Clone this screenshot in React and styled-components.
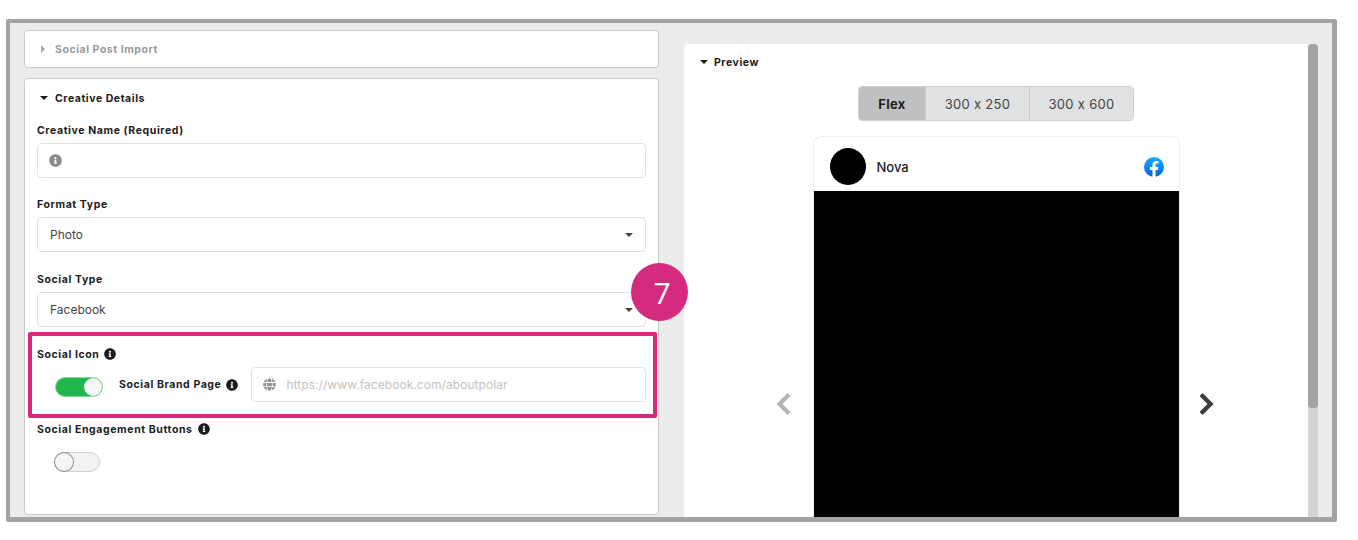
import styled, { createGlobalStyle } from 'styled-components'
import { FaInfoCircle, FaGlobe } from 'react-icons/fa'

const GlobalStyle = createGlobalStyle`
  html, body {
    margin: 0;
    padding: 0;
    background: #fff;
    font-family: "Inter", "Liberation Sans", sans-serif;
  }
`

const Page = styled.div`
  position: relative;
  width: 1358px;
  height: 540px;
  padding: 19px 0 0 6px;
  box-sizing: border-box;
  overflow: hidden;
`

const Frame = styled.div`
  display: flex;
  width: 1331px;
  height: 503px;
  box-sizing: border-box;
  padding: 7px 0 0 14px;
  background: #ececec;
  border: solid #a3a3a3;
  border-width: 4px 5px 5px 4px;
  border-radius: 2px;
  overflow: hidden;
`

const LeftColumn = styled.div`
  display: flex;
  flex-direction: column;
  gap: 10px;
  width: 635px;
  flex-shrink: 0;
`

const Card = styled.section`
  box-sizing: border-box;
  background: #fff;
  border: 1px solid #c9c9c9;
  border-radius: 4px;
  padding: 0 12px;
  height: ${p => p.$height};
`

const SectionHead = styled.div`
  display: flex;
  align-items: center;
  flex-shrink: 0;
  gap: ${p => p.$gap || '7px'};
  height: ${p => p.$height || '36px'};
  margin-bottom: ${p => p.$after || '0'};
  padding-left: 3px;
  font-size: 10.5px;
  font-weight: 700;
  letter-spacing: 0.55px;
  color: ${p => p.$muted ? '#9a9a9a' : '#1c1c1c'};
`

const CaretDown = styled.span`
  width: 0;
  height: 0;
  border-left: 4px solid transparent;
  border-right: 4px solid transparent;
  border-top: 4px solid ${p => p.$color || '#1c1c1c'};
`

const CaretRight = styled.span`
  width: 0;
  height: 0;
  margin-left: 1px;
  border-top: 4px solid transparent;
  border-bottom: 4px solid transparent;
  border-left: 4px solid #a8a8a8;
`

const Field = styled.div`
  display: flex;
  flex-direction: column;
  margin-bottom: ${p => p.$after || '19px'};
`

const Label = styled.div`
  display: flex;
  align-items: center;
  gap: 5px;
  height: 14px;
  margin-bottom: ${p => p.$after || '6px'};
  font-size: 10.5px;
  font-weight: 700;
  letter-spacing: 0.6px;
  color: #1c1c1c;
  white-space: nowrap;
`

const Info = styled(FaInfoCircle)`
  width: 12px;
  height: 12px;
  color: #1c1c1c;
  flex-shrink: 0;
`

const Input = styled.div`
  display: flex;
  align-items: center;
  justify-content: space-between;
  box-sizing: border-box;
  flex: ${p => p.$grow ? 1 : 'none'};
  height: 35px;
  padding: 0 12px;
  background: #fff;
  border: 1px solid #e2e2e2;
  border-radius: 4px;
  font-size: 12px;
  color: #444;
`

const GreyInfo = styled(FaInfoCircle)`
  width: 13px;
  height: 13px;
  margin-left: -1px;
  color: #8a8a8a;
`

const Highlight = styled.div`
  box-sizing: border-box;
  height: 86px;
  margin: -14px -11px 0 -9px;
  padding: 11px 7px 0 5px;
  border: 4px solid #d52b7e;
  border-radius: 2px;
`

const BrandRow = styled.div`
  display: flex;
  align-items: center;
`

const Toggle = styled.span`
  display: flex;
  align-items: center;
  justify-content: ${p => p.$on ? 'flex-end' : 'flex-start'};
  box-sizing: border-box;
  width: ${p => p.$on ? '48px' : '46px'};
  height: 20px;
  margin-left: ${p => p.$on ? '18px' : '17px'};
  margin-top: ${p => p.$on ? '5px' : '0'};
  border-radius: 10px;
  background: ${p => p.$on ? '#21b84b' : '#f2f2f2'};
  border: 1px solid ${p => p.$on ? '#8fd7a2' : '#cfcfcf'};
`

const Knob = styled.span`
  width: 18px;
  height: 18px;
  border-radius: 50%;
  background: #f6f6f6;
  box-shadow: 0 0 0 1px ${p => p.$on ? 'transparent' : '#8d8d8d'};
`

const BrandLabel = styled(Label)`
  margin: 0 13px 0 16px;
`

const Placeholder = styled.span`
  display: flex;
  align-items: center;
  gap: 10px;
  color: #c2c2c2;
  letter-spacing: 0.06px;
`

const Globe = styled(FaGlobe)`
  width: 13px;
  height: 13px;
  margin-left: -1px;
  color: #8f8f8f;
`

const EngagementBlock = styled.div`
  margin-top: 4px;
`

const PreviewPanel = styled.div`
  display: flex;
  flex-direction: column;
  box-sizing: border-box;
  width: 624px;
  height: 600px;
  margin: 14px 0 0 25px;
  padding: 0 13px;
  background: #fff;
  border-radius: 4px 0 0 0;
  flex-shrink: 0;
`

const Tabs = styled.div`
  display: flex;
  align-self: center;
  flex-shrink: 0;
  margin: 6px 0 15px;
  height: 35px;
  border: 1px solid #d0d0d0;
  border-radius: 4px;
  overflow: hidden;
  box-sizing: border-box;
`

const Tab = styled.div`
  display: flex;
  align-items: center;
  justify-content: center;
  width: ${p => p.$width};
  background: ${p => p.$active ? '#bfc0c1' : '#e0e1e2'};
  border-left: ${p => p.$first ? 'none' : '1px solid #cbcbcb'};
  color: ${p => p.$active ? '#222' : '#444'};
  font-size: 13px;
  font-weight: ${p => p.$active ? 700 : 400};
  letter-spacing: 0.3px;
`

const Carousel = styled.div`
  display: flex;
  align-items: center;
  justify-content: center;
  flex-shrink: 0;
  gap: 20px;
`

const Arrow = styled.svg`
  width: 16px;
  height: 24px;
  fill: none;
  stroke: ${p => p.$color};
  stroke-width: 4.4;
`

const AdCard = styled.div`
  display: flex;
  flex-direction: column;
  width: 367px;
  height: 536px;
  box-sizing: border-box;
  border: 1px solid #efefef;
  border-bottom: none;
  border-radius: 8px 8px 0 0;
`

const AdHeader = styled.div`
  display: flex;
  align-items: center;
  box-sizing: border-box;
  height: 54px;
  padding: 5px 15px 0 16px;
  flex-shrink: 0;
`

const Avatar = styled.div`
  width: 36px;
  height: 37px;
  border-radius: 50%;
  background: #000;
`

const BrandName = styled.span`
  flex: 1;
  margin-left: 11px;
  font-size: 13px;
  font-weight: 500;
  color: #222;
`

const AdImage = styled.div`
  flex: 1;
  background: #000;
`

const ScrollTrack = styled.div`
  width: 10px;
  height: 600px;
  margin-top: 14px;
  background: #d4d4d4;
  border-radius: 4px 4px 0 0;
  flex-shrink: 0;
`

const ScrollThumb = styled.div`
  height: 364px;
  background: #a3a3a3;
  border-radius: 4px;
`

const StepBadge = styled.div`
  position: absolute;
  left: 631px;
  top: 263px;
  display: flex;
  align-items: center;
  justify-content: center;
  box-sizing: border-box;
  width: 57px;
  height: 58px;
  padding-left: 5px;
  border-radius: 50%;
  background: #d42b7f;
  color: #fff;
  font-family: "Open Sans", sans-serif;
  font-size: 30px;
`

function FacebookIcon() {
  return (
    <svg width="20" height="20" viewBox="0 0 20 20">
      <defs>
        <linearGradient id="fb" x1="0" y1="0" x2="0" y2="1">
          <stop offset="0" stopColor="#18acfe" />
          <stop offset="1" stopColor="#0163e0" />
        </linearGradient>
      </defs>
      <circle cx="10" cy="10" r="10" fill="url(#fb)" />
      <path
        fill="#fff"
        d="M13.9 12.9l.45-2.9h-2.78V8.12c0-.79.39-1.56 1.63-1.56h1.26V4.1s-1.15-.2-2.24-.2c-2.28 0-3.78 1.39-3.78 3.9V10H5.9v2.9h2.54v7a10 10 0 0 0 3.13 0v-7z"
      />
    </svg>
  )
}

function App() {
  return (
    <Page>
      <GlobalStyle />
      <Frame>
        <LeftColumn>
          <Card $height="38px">
            <SectionHead $muted $gap="10px"><CaretRight />Social Post Import</SectionHead>
          </Card>
          <Card $height="437px">
            <SectionHead $height="38px" $after="6px"><CaretDown />Creative Details</SectionHead>
            <Field>
              <Label>Creative Name (Required)</Label>
              <Input><GreyInfo /></Input>
            </Field>
            <Field $after="20px">
              <Label>Format Type</Label>
              <Input>Photo<CaretDown $color="#444" /></Input>
            </Field>
            <Field>
              <Label>Social Type</Label>
              <Input>Facebook<CaretDown $color="#444" /></Input>
            </Field>
            <Highlight>
              <Label>Social Icon <Info /></Label>
              <BrandRow>
                <Toggle $on><Knob $on /></Toggle>
                <BrandLabel $after="0">Social Brand Page <Info /></BrandLabel>
                <Input $grow>
                  <Placeholder><Globe />https://www.facebook.com/aboutpolar</Placeholder>
                </Input>
              </BrandRow>
            </Highlight>
            <EngagementBlock>
              <Label $after="16px">Social Engagement Buttons <Info /></Label>
              <Toggle><Knob /></Toggle>
            </EngagementBlock>
          </Card>
        </LeftColumn>
        <PreviewPanel>
          <SectionHead $gap="6px"><CaretDown />Preview</SectionHead>
          <Tabs>
            <Tab $first $active $width="66px">Flex</Tab>
            <Tab $width="103px">300 x 250</Tab>
            <Tab $width="103px">300 x 600</Tab>
          </Tabs>
          <Carousel>
            <Arrow $color="#b5b5b5" viewBox="0 0 16 24"><polyline points="12,2.5 2.5,12 12,21.5" /></Arrow>
            <AdCard>
              <AdHeader>
                <Avatar />
                <BrandName>Nova</BrandName>
                <FacebookIcon />
              </AdHeader>
              <AdImage />
            </AdCard>
            <Arrow $color="#3d3d3d" viewBox="0 0 16 24"><polyline points="1,2.5 10.5,12 1,21.5" /></Arrow>
          </Carousel>
        </PreviewPanel>
        <ScrollTrack><ScrollThumb /></ScrollTrack>
      </Frame>
      <StepBadge>7</StepBadge>
    </Page>
  )
}

export default App
